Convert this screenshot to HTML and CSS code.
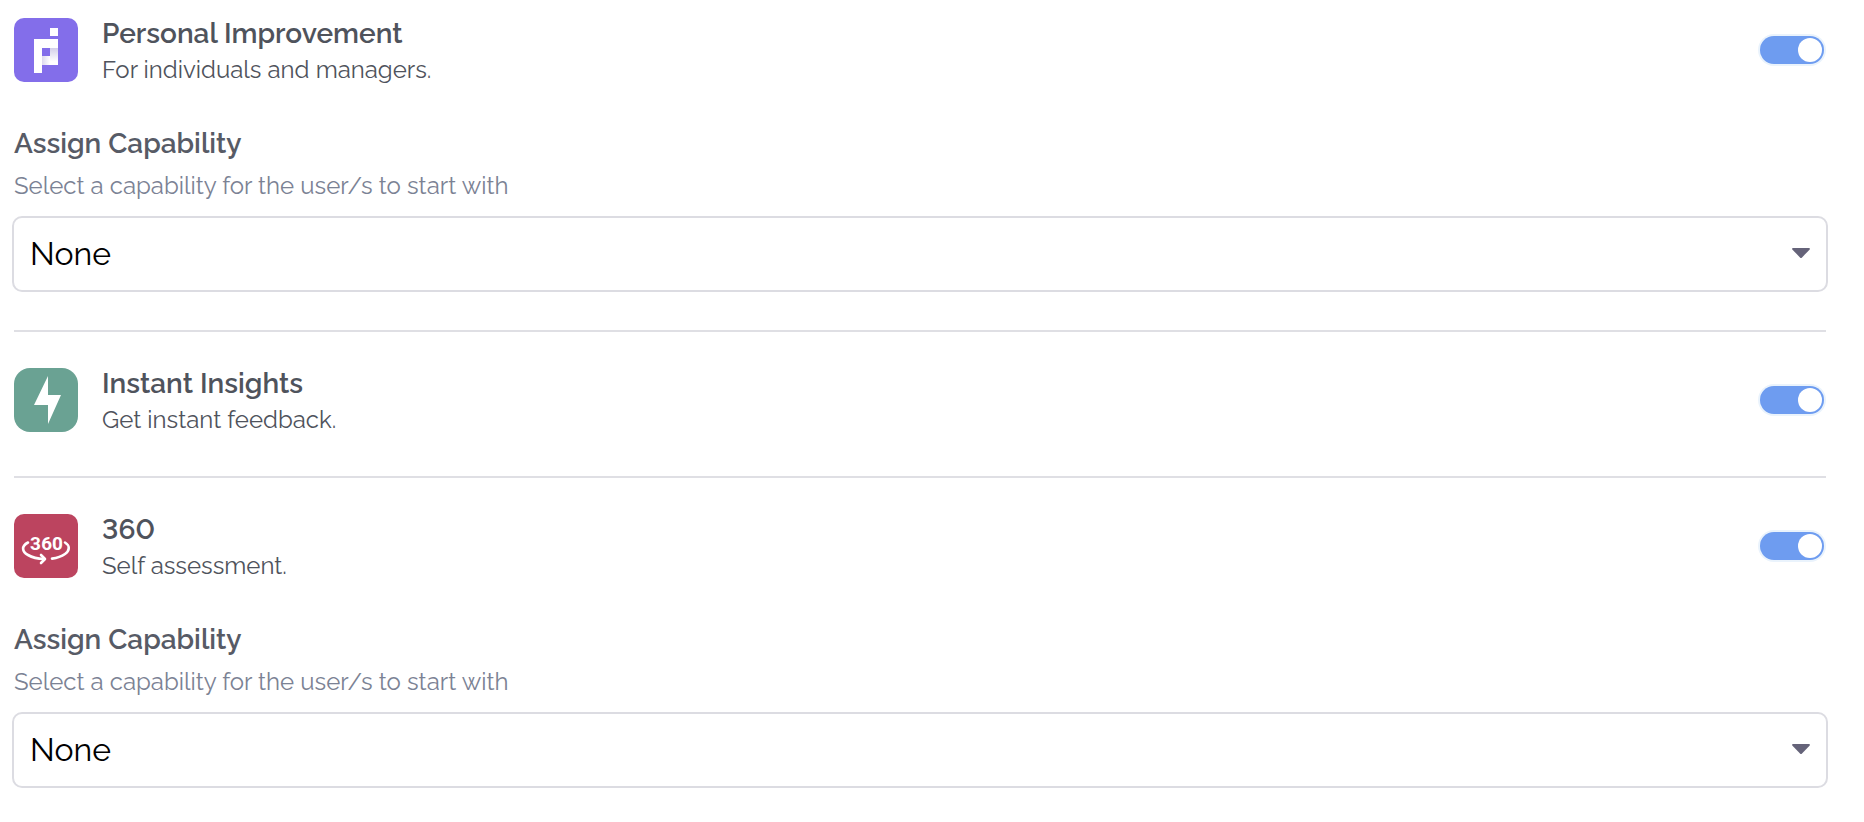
FILE: index.html
```
<!DOCTYPE html>
<html lang="en">
<head>
    <meta charset="UTF-8">
    <meta name="viewport" content="width=device-width, initial-scale=1.0">
    <title>Assign products</title>
    <link rel="stylesheet" href="styles.css">
</head>
<body>
    <main class="products">
        <section class="product">
            <div class="product-head">
                <svg class="product-icon" viewBox="0 0 64 64" aria-hidden="true">
                    <defs>
                        <linearGradient id="foldDown" x1="0" y1="0" x2="0" y2="1">
                            <stop offset="0" stop-color="#d3cfea"/>
                            <stop offset="0.8" stop-color="#fff"/>
                        </linearGradient>
                        <linearGradient id="foldRight" x1="0" y1="0" x2="1" y2="0">
                            <stop offset="0" stop-color="#dcd9ee"/>
                            <stop offset="1" stop-color="#fff"/>
                        </linearGradient>
                    </defs>
                    <rect width="64" height="64" rx="10" fill="#836eea"/>
                    <path d="M36 10h8v8h-8zM20 21h24v9H28v25h-8z" fill="#fff"/>
                    <path d="M36 30h8v17h-8z" fill="url(#foldDown)"/>
                    <path d="M28 38h8v9h-8z" fill="url(#foldRight)"/>
                </svg>
                <label class="product-text" for="personalToggle">
                    <span class="product-name">Personal Improvement</span>
                    <span class="product-desc">For individuals and managers.</span>
                </label>
                <input class="toggle" type="checkbox" id="personalToggle" checked>
            </div>
            <div class="capability">
                <label class="capability-title" for="personalCapability">Assign Capability</label>
                <p class="capability-hint">Select a capability for the user/s to start with</p>
                <div class="select-box">
                    <select id="personalCapability">
                        <option>None</option>
                    </select>
                    <svg class="select-arrow" viewBox="0 0 18 10" aria-hidden="true">
                        <path d="M1 0h16q1.500 0.500 0.500 1.700L10 9.400q-1 1-2 0L0.500 1.700Q-0.500 0.500 1 0z" fill="#656379"/>
                    </svg>
                </div>
            </div>
        </section>

        <section class="product">
            <div class="product-head">
                <svg class="product-icon" viewBox="0 0 64 64" aria-hidden="true">
                    <rect width="64" height="64" rx="16" fill="#6aa293"/>
                    <path d="M34 8v19h13L34 56V37H20z" fill="#fff"/>
                </svg>
                <label class="product-text" for="insightsToggle">
                    <span class="product-name">Instant Insights</span>
                    <span class="product-desc">Get instant feedback.</span>
                </label>
                <input class="toggle" type="checkbox" id="insightsToggle" checked>
            </div>
        </section>

        <section class="product">
            <div class="product-head">
                <svg class="product-icon" viewBox="0 0 64 64" aria-hidden="true">
                    <rect width="64" height="64" rx="10" fill="#bc445f"/>
                    <text class="icon-text" x="32.500" y="36" text-anchor="middle">360</text>
                    <g fill="none" stroke="#fff" stroke-width="2.600" stroke-linecap="round" stroke-linejoin="round">
                        <path d="M14 28.500C7 32 8 38 14 41c4 2.300 9 3.700 16 4"/>
                        <path d="M27 41l4 4-4 4"/>
                        <path d="M51 28.500c5 3 5 8 0 11.500-3 2.200-8 4-13 4.600"/>
                    </g>
                </svg>
                <label class="product-text" for="assessmentToggle">
                    <span class="product-name">360</span>
                    <span class="product-desc">Self assessment.</span>
                </label>
                <input class="toggle" type="checkbox" id="assessmentToggle" checked>
            </div>
            <div class="capability">
                <label class="capability-title" for="assessmentCapability">Assign Capability</label>
                <p class="capability-hint">Select a capability for the user/s to start with</p>
                <div class="select-box">
                    <select id="assessmentCapability">
                        <option>None</option>
                    </select>
                    <svg class="select-arrow" viewBox="0 0 18 10" aria-hidden="true">
                        <path d="M1 0h16q1.500 0.500 0.500 1.700L10 9.400q-1 1-2 0L0.500 1.700Q-0.500 0.500 1 0z" fill="#656379"/>
                    </svg>
                </div>
            </div>
        </section>
    </main>
</body>
</html>
```

FILE: styles.css
```
* {
    box-sizing: border-box;
}
body {
    margin: 0;
    background: white;
    color: #4f535c;
    font-family: Raleway, Lato, sans-serif;
    font-variant-numeric: lining-nums;
}
.products {
    padding: 14px 38px 32px 14px;
}
.product {
    padding-bottom: 40px;
}
.product + .product {
    border-top: 2px solid #dfdfe4;
    padding-top: 32px;
}
.product:last-child {
    padding-bottom: 0;
}
.product-head {
    display: flex;
    align-items: center;
    gap: 24px;
}
.product-icon {
    flex: none;
    width: 64px;
    height: 64px;
}
.icon-text {
    font-family: Roboto, sans-serif;
    font-size: 19px;
    font-weight: 700;
    fill: white;
}
.product-text {
    flex: 1;
}
.product-name,
.product-desc {
    display: block;
}
.product-name {
    line-height: 40px;
}
.product-desc {
    line-height: 32px;
}
.product-name,
.capability-title {
    font-size: 28px;
    font-weight: 600;
}
.product-desc,
.capability-hint {
    font-size: 24px;
}
.toggle {
    appearance: none;
    flex: none;
    width: 64px;
    height: 28px;
    margin: 0 2px 0 0;
    padding: 2px;
    border-radius: 14px;
    background: #6e9cf0;
    box-shadow: 0 0 0 2px #eaf3fc;
    display: flex;
    cursor: pointer;
}
.toggle::before {
    content: "";
    width: 24px;
    height: 24px;
    border-radius: 50%;
    background: white;
}
.toggle:checked {
    justify-content: flex-end;
}
.toggle:not(:checked) {
    background: #c8cad2;
}
.capability {
    padding-top: 40px;
}
.capability-title {
    display: block;
    line-height: 36px;
    color: #575b66;
}
.capability-hint {
    margin: 8px 0 14px;
    line-height: 32px;
    color: #7b8294;
}
.select-box {
    position: relative;
    margin: 0 -2px;
}
.product:not(:last-child) .select-box {
    margin-bottom: -2px;
}
.select-box select {
    appearance: none;
    display: block;
    width: 100%;
    height: 76px;
    padding: 0 48px 2px 16px;
    border: 2px solid #dcdce2;
    border-radius: 10px;
    background: white;
    color: black;
    font-family: inherit;
    font-size: 32px;
}
.select-arrow {
    position: absolute;
    top: 32px;
    right: 18px;
    width: 18px;
    height: 10px;
    pointer-events: none;
}
```
